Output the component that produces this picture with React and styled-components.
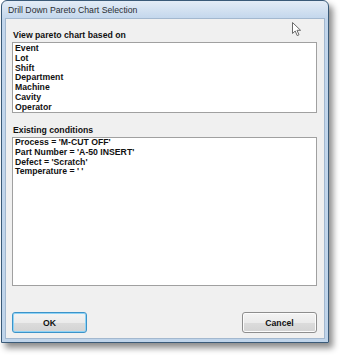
import React from "react";
import styled, { createGlobalStyle } from "styled-components";

const GlobalStyle = createGlobalStyle`
  html, body {
    margin: 0;
    padding: 0;
    background: #ffffff;
  }
  body {
    font-family: "Liberation Sans", Arial, sans-serif;
  }
`;

const Page = styled.div`
  position: relative;
  width: 344px;
  height: 359px;
  padding: 0 0 0 1px;
  box-sizing: border-box;
`;

const Window = styled.div`
  width: 328px;
  height: 343px;
  box-sizing: border-box;
  border: 1px solid #3a5a78;
  border-radius: 6px 6px 0 0;
  background: linear-gradient(#e3ecf6, #c2d6ec 18px, #bfd4ea);
  box-shadow: 4px 5px 6px rgba(0, 0, 0, 0.45);
  display: flex;
  flex-direction: column;
`;

const TitleBar = styled.div`
  height: 17px;
  flex: none;
  padding-left: 6px;
  font-size: 8.7px;
  line-height: 18px;
  color: #2a2e33;
  white-space: nowrap;
`;

const Client = styled.div`
  flex: 1;
  margin: 0 3px 3px 3px;
  background: #f0f0f0;
  border: 1px solid #a3b8cf;
  padding: 10px 7px 0 6px;
  display: flex;
  flex-direction: column;
`;

const Label = styled.div`
  font-size: 8.7px;
  font-weight: bold;
  line-height: 12px;
  color: #111;
  padding-left: 1px;
  margin-bottom: 1px;
`;

const ListBox = styled.div`
  height: ${(p) => p.$h}px;
  box-sizing: border-box;
  background: #ffffff;
  border: 1px solid #a0a0a0;
  padding: ${(p) => p.$pad}px 0 0 2px;
  overflow: hidden;
  margin-bottom: ${(p) => p.$mb}px;
`;

const Item = styled.div`
  font-size: 8.7px;
  font-weight: bold;
  line-height: 9.8px;
  color: #111;
  white-space: nowrap;
`;

const ButtonRow = styled.div`
  display: flex;
  justify-content: space-between;
`;

const Button = styled.button`
  width: 75px;
  height: 21px;
  box-sizing: border-box;
  border: 1px solid ${(p) => (p.$default ? "#3c93c9" : "#8e8e8e")};
  border-radius: 3px;
  background: linear-gradient(#f4f4f4, #ebebeb 50%, #dcdcdc 51%, #d3d3d3);
  box-shadow: ${(p) => (p.$default ? "inset 0 0 0 1px #8fd3f5" : "inset 0 0 0 1px #fcfcfc")};
  font-family: "Liberation Sans", Arial, sans-serif;
  font-size: 8.7px;
  font-weight: bold;
  color: #111;
  padding: 0;
`;

const Cursor = styled.svg`
  position: absolute;
  left: 292px;
  top: 22px;
`;

const pivots = ["Event", "Lot", "Shift", "Department", "Machine", "Cavity", "Operator"];
const conditions = [
  "Process = 'M-CUT OFF'",
  "Part Number = 'A-50 INSERT'",
  "Defect = 'Scratch'",
  "Temperature = ' '",
];

export default function App() {
  return (
    <Page>
      <GlobalStyle />
      <Window>
        <TitleBar>Drill Down Pareto Chart Selection</TitleBar>
        <Client>
          <Label>View pareto chart based on</Label>
          <ListBox $h={71} $pad={1} $mb={11}>
            {pivots.map((p) => (
              <Item key={p}>{p}</Item>
            ))}
          </ListBox>
          <Label>Existing conditions</Label>
          <ListBox $h={149} $pad={0} $mb={26}>
            {conditions.map((c) => (
              <Item key={c}>{c}</Item>
            ))}
          </ListBox>
          <ButtonRow>
            <Button $default>OK</Button>
            <Button>Cancel</Button>
          </ButtonRow>
        </Client>
      </Window>
      <Cursor width="12" height="15" viewBox="0 0 12 15">
        <path
          d="M0.5 0.5 L0.5 11.5 L3.2 9 L5.2 13.6 L7 12.8 L5 8.3 L8.6 8.3 Z"
          fill="#ffffff"
          stroke="#6a6a6a"
          strokeWidth="1"
          strokeLinejoin="round"
        />
      </Cursor>
    </Page>
  );
}
